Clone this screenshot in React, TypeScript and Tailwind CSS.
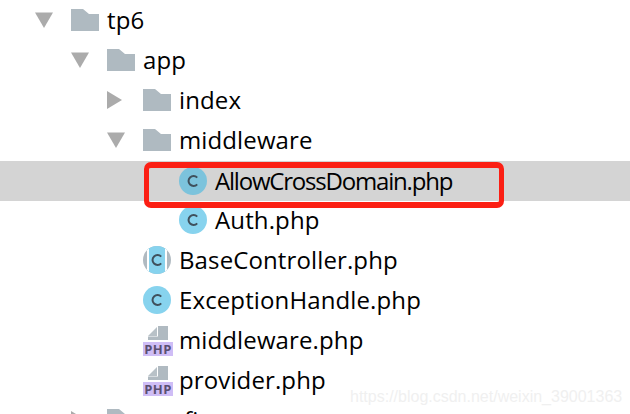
function Arrow({ open }: { open: boolean }) {
  return (
    <svg width="18" height="18" viewBox="0 0 18 18" className="block">
      {open ? <polygon points="0,1.5 18,1.5 9,17" fill="#ababab" /> : <polygon points="0,0 15,9 0,18" fill="#ababab" />}
    </svg>
  );
}

function Folder() {
  return (
    <svg width="28" height="22" viewBox="0 0 28 22" className="block">
      <polygon points="0,0 12,0 18,5 28,5 28,22 0,22" fill="#afbac1" />
    </svg>
  );
}

function CGlyph() {
  return (
    <svg width="14" height="14" viewBox="0 0 14 14" className="block">
      <path d="M11.2 3.6 A5 5 0 1 0 11.2 10.4" fill="none" stroke="#3f505c" strokeWidth="2" />
    </svg>
  );
}

function ClassIcon({ selected }: { selected?: boolean }) {
  return (
    <div className={`flex h-[28px] w-[28px] items-center justify-center rounded-full ${selected ? "bg-[#7cc3dc]" : "bg-[#87d3ee]"}`}>
      <CGlyph />
    </div>
  );
}

function BaseIcon() {
  return (
    <div className="relative h-[28px] w-[28px] overflow-hidden rounded-full bg-[#b0bac1]">
      <div className="absolute inset-y-0 left-[4px] flex w-[20px] items-center justify-center border-x-2 border-white bg-[#87d3ee]">
        <CGlyph />
      </div>
    </div>
  );
}

function PhpIcon() {
  return (
    <div className="mt-[2px] flex w-[30px] flex-col items-center gap-[2px]">
      <svg width="20" height="14" viewBox="0 0 20 14" className="block">
        <polygon points="0,10 9,1 9,10" fill="#b8c1c7" />
        <rect x="10" y="0" width="10" height="14" fill="#b0bac1" />
        <rect x="0" y="10.5" width="20" height="3.5" fill="#b0bac1" />
      </svg>
      <div className="flex h-[14px] w-[30px] items-center justify-center bg-[#cfbdf6] font-['Open_Sans',sans-serif] text-[13px] font-bold leading-none tracking-[0.4px] text-[#5a4f72]">
        PHP
      </div>
    </div>
  );
}

type Row = {
  pad: string;
  arrow?: "open" | "closed";
  icon: "folder" | "class" | "classSel" | "base" | "php";
  label: string;
  selected?: boolean;
};

const rows: Row[] = [
  { pad: "pl-[35px]", arrow: "open", icon: "folder", label: "tp6" },
  { pad: "pl-[71px]", arrow: "open", icon: "folder", label: "app" },
  { pad: "pl-[107px]", arrow: "closed", icon: "folder", label: "index" },
  { pad: "pl-[107px]", arrow: "open", icon: "folder", label: "middleware" },
  { pad: "pl-[179px]", icon: "classSel", label: "AllowCrossDomain.php", selected: true },
  { pad: "pl-[179px]", icon: "class", label: "Auth.php" },
  { pad: "pl-[143px]", icon: "base", label: "BaseController.php" },
  { pad: "pl-[143px]", icon: "class", label: "ExceptionHandle.php" },
  { pad: "pl-[143px]", icon: "php", label: "middleware.php" },
  { pad: "pl-[143px]", icon: "php", label: "provider.php" },
  { pad: "pl-[71px]", arrow: "closed", icon: "folder", label: "config" },
];

function Icon({ kind }: { kind: Row["icon"] }) {
  if (kind === "folder") return <Folder />;
  if (kind === "class") return <ClassIcon />;
  if (kind === "classSel") return <ClassIcon selected />;
  if (kind === "base") return <BaseIcon />;
  return <PhpIcon />;
}

export default function App() {
  return (
    <div className="relative h-[414px] w-[630px] overflow-hidden bg-white font-['Open_Sans',sans-serif] text-[24px] text-black">
      {rows.map((r) => (
        <div key={r.label} className={`flex h-[40px] items-center ${r.pad} ${r.selected ? "mt-[1px] -mb-[1px] bg-[#d4d4d4]" : ""}`}>
          {r.arrow && (
            <div className="w-[36px]">
              <Arrow open={r.arrow === "open"} />
            </div>
          )}
          <div className="w-[36px]">
            <Icon kind={r.icon} />
          </div>
          <span className={`leading-none whitespace-nowrap ${r.selected ? "tracking-[-1.2px]" : "tracking-[0.12px]"}`}>{r.label}</span>
        </div>
      ))}
      <div className="absolute left-[144px] top-[162px] h-[46px] w-[360px] rounded-[7px] border-x-[5px] border-y-[6px] border-[#fb1f14]" />
      <div className="absolute left-[350px] top-[385px] font-['Liberation_Sans',sans-serif] text-[16px] whitespace-nowrap text-[#f0f0f0]">
        https://blog.csdn.net/weixin_39001363
      </div>
    </div>
  );
}
